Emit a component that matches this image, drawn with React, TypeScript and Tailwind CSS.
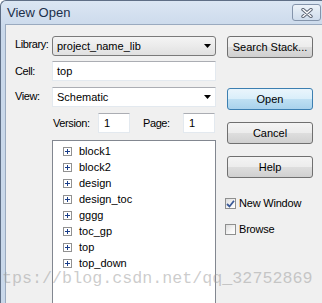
import React from 'react';

const items = ['block1', 'block2', 'design', 'design_toc', 'gggg', 'toc_gp', 'top', 'top_down'];

function CloseButton() {
  return (
    <div className="w-[29px] h-[17px] rounded-[3px] border border-[#8494ab] bg-[linear-gradient(#eef3f9_0%,#dde7f2_50%,#cfdcec_100%)] flex items-center justify-center">
      <svg width="12" height="10" viewBox="0 0 12 10">
        <path d="M2 1.5 L10 8.5 M10 1.5 L2 8.5" stroke="#5b6474" strokeWidth="3.4" strokeLinecap="round" />
        <path d="M2 1.5 L10 8.5 M10 1.5 L2 8.5" stroke="#ffffff" strokeWidth="1.5" strokeLinecap="round" />
      </svg>
    </div>
  );
}

function Arrow() {
  return (
    <svg width="7" height="4" viewBox="0 0 7 4" className="mr-[4px]">
      <path d="M0 0 H7 L3.5 4 Z" fill="#000" />
    </svg>
  );
}

function WinButton({ label, primary }: { label: string; primary?: boolean }) {
  return (
    <div
      className={
        primary
          ? 'h-[22px] rounded-[3px] border border-[#3c7fb1] bg-[linear-gradient(#eaf5fc_0%,#d9eefa_50%,#bfe0f3_50%,#a9d2ec_100%)] flex items-center justify-center text-[11px] text-black'
          : 'h-[22px] rounded-[3px] border border-[#707070] bg-[linear-gradient(#f4f4f4_0%,#ececec_50%,#dedede_50%,#d0d0d0_100%)] flex items-center justify-center text-[11px] text-black'
      }
    >
      {label}
    </div>
  );
}

function Checkbox({ checked, label }: { checked?: boolean; label: string }) {
  return (
    <div className="flex items-center h-[13px]">
      <div className="w-[11px] h-[11px] border border-[#8e8f8f] bg-[linear-gradient(135deg,#dcdcdc_0%,#f6f6f6_60%,#ffffff_100%)] flex items-center justify-center">
        {checked && (
          <svg width="9" height="8" viewBox="0 0 9 8">
            <path d="M1 4 L3.5 6.5 L8 0.8" stroke="#3b5a98" strokeWidth="1.8" fill="none" />
          </svg>
        )}
      </div>
      <span className="ml-[3px] text-[11px] tracking-[-0.2px] text-black">{label}</span>
    </div>
  );
}

function PlusBox() {
  return (
    <div className="w-[9px] h-[9px] border border-[#919191] bg-white flex items-center justify-center">
      <svg width="5" height="5" viewBox="0 0 5 5">
        <path d="M0 2.5 H5 M2.5 0 V5" stroke="#1a3e8a" strokeWidth="1" />
      </svg>
    </div>
  );
}

export default function App() {
  return (
    <div className="relative w-[322px] h-[303px] overflow-hidden rounded-tl-[6px] border-l border-t border-[#5f6f86] bg-[linear-gradient(#dbe6f3_0%,#c9d8ea_30px,#c9d8ea_100%)] font-['Liberation_Sans',Arial,sans-serif]">
      {/* Title bar */}
      <div className="h-[23px] flex items-center justify-between pl-[6px] pr-[1px]">
        <span className="text-[13px] text-[#1c2f4a] pt-[1px]">View Open</span>
        <CloseButton />
      </div>

      {/* Client area */}
      <div className="ml-[4px] h-[280px] bg-[#f0f0f0] border-l border-t border-[#9aaabf] flex">
        {/* Left column */}
        <div className="w-[210px] pt-[11px] pl-[9px]">
          <div className="flex items-center h-[20px]">
            <span className="w-[37px] text-[11px] tracking-[-0.4px] text-black -mt-[4px]">Library:</span>
            <div className="w-[164px] h-[20px] rounded-[3px] border border-[#7a7a7a] bg-[linear-gradient(#f4f4f4_0%,#ebebeb_50%,#e0e0e0_100%)] flex items-center justify-between pl-[4px]">
              <span className="text-[11px] text-black">project_name_lib</span>
              <Arrow />
            </div>
          </div>

          <div className="flex items-center h-[20px] mt-[5px]">
            <span className="w-[37px] text-[11px] tracking-[-0.4px] text-black">Cell:</span>
            <div className="w-[164px] h-[20px] border border-[#e3e9ef] border-t-[#abadb3] bg-white flex items-center pl-[4px]">
              <span className="text-[11px] text-black">top</span>
            </div>
          </div>

          <div className="flex items-center h-[20px] mt-[6px]">
            <span className="w-[37px] text-[11px] tracking-[-0.4px] text-black -mt-[2px]">View:</span>
            <div className="w-[164px] h-[20px] border border-[#e3e9ef] border-t-[#abadb3] bg-white flex items-center justify-between pl-[4px]">
              <span className="text-[11px] text-black">Schematic</span>
              <Arrow />
            </div>
          </div>

          <div className="flex items-center h-[20px] mt-[6px] pl-[38px]">
            <span className="w-[45px] text-[11px] tracking-[-0.4px] text-black">Version:</span>
            <div className="w-[32px] h-[20px] border border-[#e3e9ef] border-t-[#abadb3] bg-white flex items-center pl-[5px]">
              <span className="text-[11px] text-black">1</span>
            </div>
            <span className="ml-[13px] w-[40px] text-[11px] tracking-[-0.4px] text-black">Page:</span>
            <div className="w-[32px] h-[20px] border border-[#e3e9ef] border-t-[#abadb3] bg-white flex items-center pl-[5px]">
              <span className="text-[11px] text-black">1</span>
            </div>
          </div>

          <div className="ml-[37px] mt-[7px] w-[164px] h-[180px] border border-[#828790] bg-white pt-[2px] pl-[10px]">
            {items.map((item) => (
              <div key={item} className="flex items-center h-[16px]">
                <PlusBox />
                <span className="ml-[7px] text-[11px] text-black">{item}</span>
              </div>
            ))}
          </div>
        </div>

        {/* Right column */}
        <div className="ml-[11px] w-[86px] pt-[11px]">
          <WinButton label="Search Stack..." />
          <div className="mt-[30px]">
            <WinButton label="Open" primary />
          </div>
          <div className="mt-[12px]">
            <WinButton label="Cancel" />
          </div>
          <div className="mt-[12px]">
            <WinButton label="Help" />
          </div>
          <div className="mt-[19px] -ml-[2px]">
            <Checkbox checked label="New Window" />
          </div>
          <div className="mt-[13px] -ml-[2px]">
            <Checkbox label="Browse" />
          </div>
        </div>
      </div>

      {/* Watermark */}
      <div className="absolute left-[-19px] top-[270px] whitespace-nowrap leading-none text-[16.7px] font-['Liberation_Mono',monospace] text-[#9a9a9a]/50 pointer-events-none">
        https://blog.csdn.net/qq_32752869
      </div>
    </div>
  );
}
